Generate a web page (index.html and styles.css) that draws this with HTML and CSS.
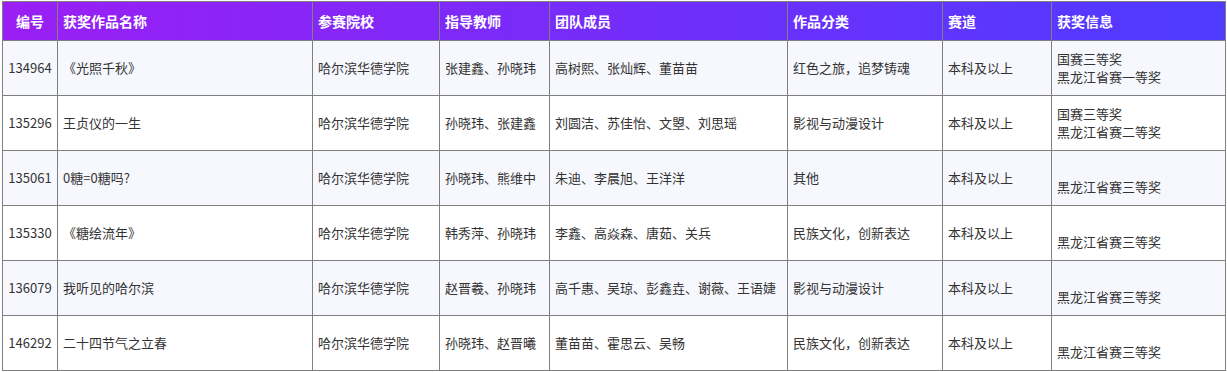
FILE: index.html
```html
<!DOCTYPE html>
<html lang="zh-CN">
<head>
<meta charset="utf-8">
<title>获奖信息</title>
<link rel="stylesheet" href="styles.css">
</head>
<body>
<table class="awards">
  <colgroup>
    <col class="c1"><col class="c2"><col class="c3"><col class="c4"><col class="c5"><col class="c6"><col class="c7"><col class="c8">
  </colgroup>
  <thead>
    <tr>
      <th class="num">编号</th>
      <th>获奖作品名称</th>
      <th>参赛院校</th>
      <th>指导教师</th>
      <th>团队成员</th>
      <th>作品分类</th>
      <th>赛道</th>
      <th>获奖信息</th>
    </tr>
  </thead>
  <tbody>
    <tr>
      <td class="num">134964</td>
      <td>《光照千秋》</td>
      <td>哈尔滨华德学院</td>
      <td>张建鑫、孙晓玮</td>
      <td>高树熙、张灿辉、董苗苗</td>
      <td>红色之旅，追梦铸魂</td>
      <td>本科及以上</td>
      <td>国赛三等奖<br>黑龙江省赛一等奖</td>
    </tr>
    <tr>
      <td class="num">135296</td>
      <td>王贞仪的一生</td>
      <td>哈尔滨华德学院</td>
      <td>孙晓玮、张建鑫</td>
      <td>刘圆洁、苏佳怡、文曌、刘思瑶</td>
      <td>影视与动漫设计</td>
      <td>本科及以上</td>
      <td>国赛三等奖<br>黑龙江省赛二等奖</td>
    </tr>
    <tr>
      <td class="num">135061</td>
      <td>0糖=0糖吗?</td>
      <td>哈尔滨华德学院</td>
      <td>孙晓玮、熊维中</td>
      <td>朱迪、李晨旭、王洋洋</td>
      <td>其他</td>
      <td>本科及以上</td>
      <td><br>黑龙江省赛三等奖</td>
    </tr>
    <tr>
      <td class="num">135330</td>
      <td>《糖绘流年》</td>
      <td>哈尔滨华德学院</td>
      <td>韩秀萍、孙晓玮</td>
      <td>李鑫、高焱森、唐茹、关兵</td>
      <td>民族文化，创新表达</td>
      <td>本科及以上</td>
      <td><br>黑龙江省赛三等奖</td>
    </tr>
    <tr>
      <td class="num">136079</td>
      <td>我听见的哈尔滨</td>
      <td>哈尔滨华德学院</td>
      <td>赵晋羲、孙晓玮</td>
      <td>高千惠、吴琼、彭鑫垚、谢薇、王语婕</td>
      <td>影视与动漫设计</td>
      <td>本科及以上</td>
      <td><br>黑龙江省赛三等奖</td>
    </tr>
    <tr>
      <td class="num">146292</td>
      <td>二十四节气之立春</td>
      <td>哈尔滨华德学院</td>
      <td>孙晓玮、赵晋曦</td>
      <td>董苗苗、霍思云、吴畅</td>
      <td>民族文化，创新表达</td>
      <td>本科及以上</td>
      <td><br>黑龙江省赛三等奖</td>
    </tr>
  </tbody>
</table>
</body>
</html>
```
FILE: styles.css
```css
html, body {
  margin: 0;
  padding: 0;
  background: #ffffff;
}
body {
  padding: 1px 0 0 2px;
  font-family: "Noto Sans CJK SC", "Noto Sans", sans-serif;
  font-size: 13px;
  color: #333333;
}
.awards {
  border-collapse: collapse;
  table-layout: fixed;
  width: 1223px;
  border: 1px solid #808080;
}
.c1 { width: 55px; }
.c2 { width: 255px; }
.c3 { width: 127px; }
.c4 { width: 110px; }
.c5 { width: 238px; }
.c6 { width: 155px; }
.c7 { width: 109px; }
.c8 { width: 174px; }
.awards th,
.awards td {
  border: 1px solid #808080;
  padding: 0 5px;
  text-align: left;
  vertical-align: middle;
  line-height: 18px;
  white-space: nowrap;
}
.awards thead tr {
  background: linear-gradient(to right, #9a1ff4, #4e3bff);
}
.awards th {
  height: 38px;
  color: #ffffff;
  font-size: 14px;
  font-weight: bold;
}
.awards td {
  height: 54px;
}
.awards tbody tr:nth-child(odd) {
  background: #f7f8fe;
}
.awards tbody tr:nth-child(even) {
  background: #ffffff;
}
.awards .num {
  text-align: center;
  padding: 0 2px;
}
```
